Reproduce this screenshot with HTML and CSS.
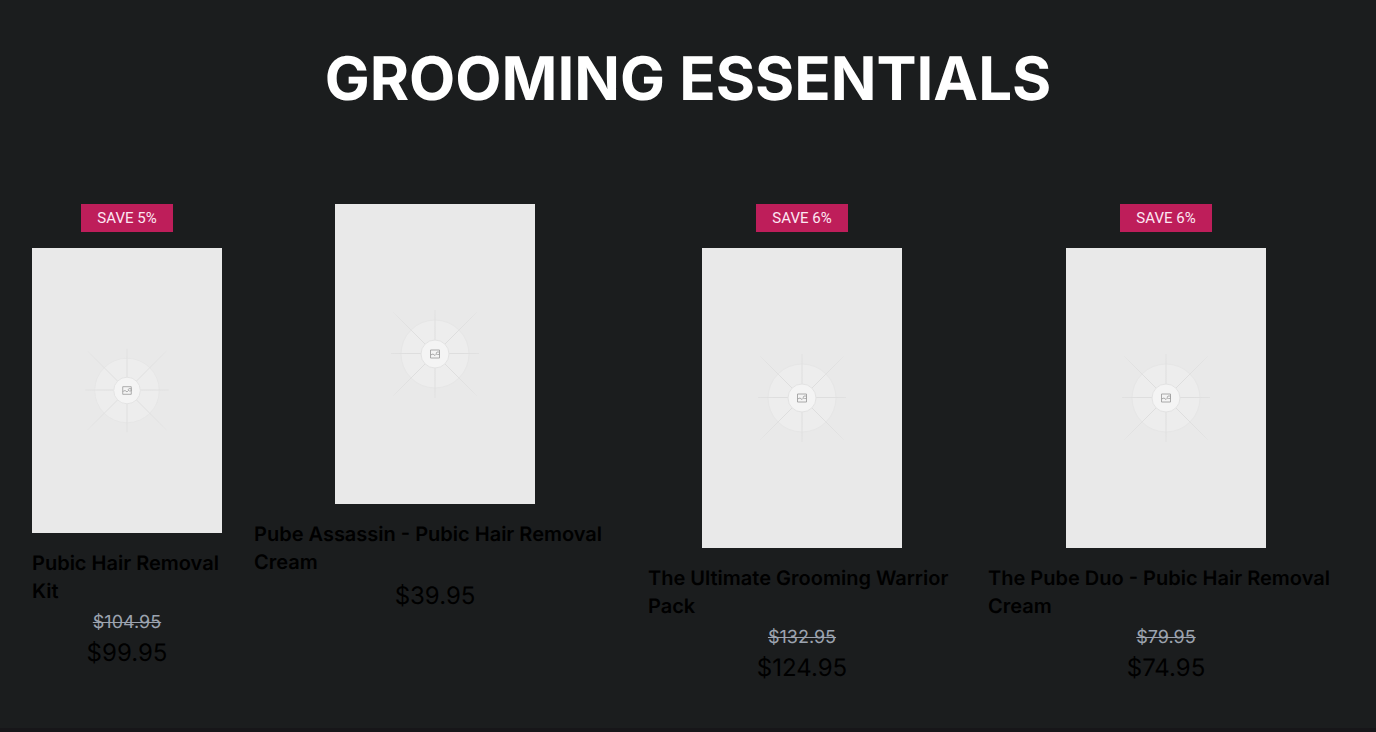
FILE: index.html
```html
<!DOCTYPE html>
<html lang="en">
<head>
<meta charset="utf-8">
<meta name="viewport" content="width=device-width, initial-scale=1">
<title>Grooming Essentials</title>
<link rel="stylesheet" href="styles.css">
</head>
<body>
<svg class="defs" aria-hidden="true">
  <defs>
    <radialGradient id="fade" gradientUnits="userSpaceOnUse" cx="100" cy="150" r="64">
      <stop offset="0.4" stop-color="#dedede"/>
      <stop offset="0.8" stop-color="#e2e2e2"/>
      <stop offset="1" stop-color="#e9e9e9"/>
    </radialGradient>
    <symbol id="placeholder" viewBox="0 0 200 300">
      <rect width="200" height="300" fill="#e9e9e9"/>
      <circle cx="100" cy="150" r="34" fill="#ededed" stroke="#e6e6e6"/>
      <path d="M56 149.500h88M100 106v88M58 108l84 84M58 192l84-84" fill="none" stroke="url(#fade)"/>
      <circle cx="100" cy="150" r="14" fill="#f4f4f4" stroke="#e3e3e3"/>
      <path d="M95.500 146h9v8h-9zM95.500 151l2.500-1 2 1.500 1.500-1.500" fill="none" stroke="#a0a0a0" stroke-width=".9"/>
      <path d="M101 149.500l1-1.500h2.500v2.500h-2z" fill="none" stroke="#a0a0a0" stroke-width=".8"/>
    </symbol>
  </defs>
</svg>
<main class="essentials">
  <h1 class="heading">GROOMING ESSENTIALS</h1>
  <div class="products">
    <article class="product">
      <span class="badge">SAVE 5%</span>
      <svg class="photo" viewBox="0 0 200 300" role="img" aria-label="Pubic Hair Removal Kit"><use href="#placeholder"/></svg>
      <h2 class="title">Pubic Hair Removal Kit</h2>
      <s class="was">$104.95</s>
      <span class="price">$99.95</span>
    </article>
    <article class="product">
      <svg class="photo" viewBox="0 0 200 300" role="img" aria-label="Pube Assassin"><use href="#placeholder"/></svg>
      <h2 class="title">Pube Assassin - Pubic Hair Removal Cream</h2>
      <span class="price">$39.95</span>
    </article>
    <article class="product">
      <span class="badge">SAVE 6%</span>
      <svg class="photo" viewBox="0 0 200 300" role="img" aria-label="The Ultimate Grooming Warrior Pack"><use href="#placeholder"/></svg>
      <h2 class="title">The Ultimate Grooming Warrior Pack</h2>
      <s class="was">$132.95</s>
      <span class="price">$124.95</span>
    </article>
    <article class="product">
      <span class="badge">SAVE 6%</span>
      <svg class="photo" viewBox="0 0 200 300" role="img" aria-label="The Pube Duo"><use href="#placeholder"/></svg>
      <h2 class="title">The Pube Duo - Pubic Hair Removal Cream</h2>
      <s class="was">$79.95</s>
      <span class="price">$74.95</span>
    </article>
  </div>
</main>
</body>
</html>
```
FILE: styles.css
```css
* { box-sizing: border-box; }
body {
  margin: 0;
  background: #171619;
  font-family: Inter, "Liberation Sans", sans-serif;
  text-rendering: geometricPrecision;
  color: #000;
}
.defs { position: absolute; width: 0; height: 0; }
.essentials {
  background: #1b1d1e;
  padding: 48px 32px 44px;
}
.heading {
  margin: 0 0 94px;
  color: #fff;
  font-size: 60px;
  line-height: 62px;
  font-weight: 700;
  text-align: center;
}
.products {
  display: grid;
  grid-template-columns: 190fr 362fr 308fr 356fr;
  gap: 32px;
  align-items: start;
}
.product {
  display: flex;
  flex-direction: column;
  align-items: center;
}
.badge {
  margin-bottom: 16px;
  padding: 4px 16px;
  background: #be1e5a;
  color: #fce7f3;
  font-family: Roboto, Inter, sans-serif;
  font-size: 15px;
  line-height: 20px;
  text-rendering: auto;
}
.photo {
  display: block;
  width: 100%;
  max-width: 200px;
  height: auto;
}
.title {
  align-self: stretch;
  margin: 16px 0 4px;
  font-size: 20px;
  line-height: 28px;
  font-weight: 600;
}
.was {
  color: #9ca3af;
  font-size: 18px;
  line-height: 28px;
}
.price {
  font-size: 24px;
  line-height: 32px;
}
```
